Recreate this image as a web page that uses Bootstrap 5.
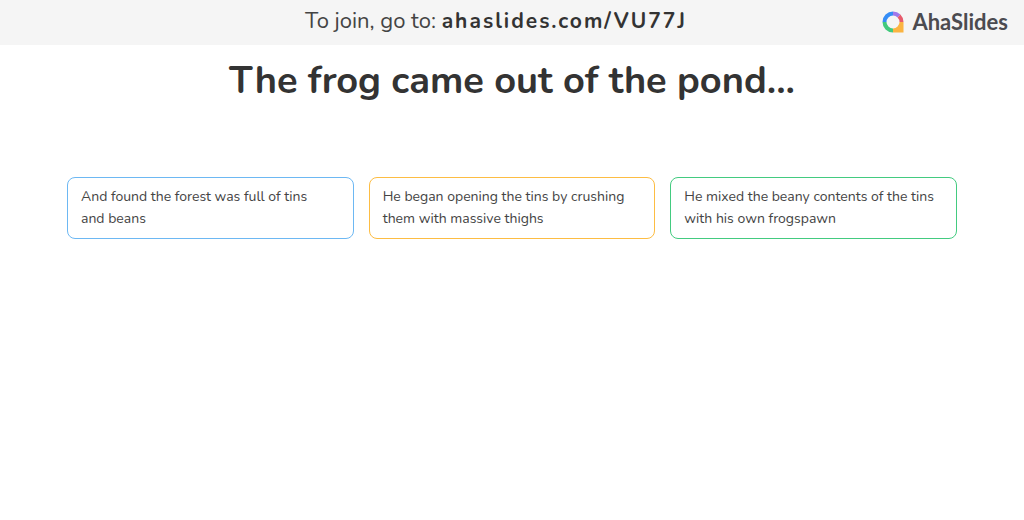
<!DOCTYPE html>
<html lang="en">
<head>
<meta charset="utf-8">
<meta name="viewport" content="width=device-width, initial-scale=1">
<title>The frog came out of the pond... - AhaSlides</title>
<link href="https://cdn.jsdelivr.net/npm/bootstrap@5.3.0/dist/css/bootstrap.min.css" rel="stylesheet">
<style>
body{font-family:Nunito,"Open Sans",sans-serif;color:#333;background:#fff}
.join-bar{background:#f5f5f5;display:grid;grid-template-columns:1fr auto 1fr;padding-bottom:2px}
.join-text{font-size:22px;line-height:43px;margin-right:32px}
.join-text span{color:#444}
.join-text b{font-size:21px;font-weight:700;letter-spacing:2px}
.brand-logo{font-family:Lato,sans-serif;font-weight:700;font-size:22px;line-height:43px;color:#4b4b50;gap:8px}
.slide-title{font-size:38px;line-height:48px;font-weight:700;margin-top:12px}
.answers{padding:0 67px;margin-top:72px;gap:15px}
.answer{border:1px solid;border-radius:8px;font-size:14px;line-height:22px;padding:8px 20px 8px 13px;flex:1 1 0;color:#444}
.answer-blue{border-color:#6db8f3}
.answer-amber{border-color:#fdbd43}
.answer-green{border-color:#43cb80}
</style>
</head>
<body>
<header class="join-bar align-items-center px-3">
<span></span>
<div class="join-text"><span>To join, go to:</span> <b>ahaslides.com/VU77J</b></div>
<div class="brand-logo d-flex align-items-center justify-content-end">
<svg width="22" height="22" viewBox="0 0 22 22" fill="none" stroke-width="4" aria-hidden="true">
<path d="M2.500 11A8.500 8.500 0 0 1 11 2.500" stroke="#358df6"/>
<path d="M11 2.500a8.500 8.500 0 0 1 6 2.500" stroke="#a078ea"/>
<path d="M17 5a8.500 8.500 0 0 1 2.500 6" stroke="#e75b6c"/>
<path d="M2.500 11a8.500 8.500 0 0 0 8.500 8.500" stroke="#42c97c"/>
<path d="M17.500 11h4v10.500H11v-4a6.500 6.500 0 0 0 6.500-6.500z" fill="#fbb441"/>
</svg>
<span>AhaSlides</span>
</div>
</header>
<main>
<h1 class="slide-title text-center mb-0">The frog came out of the pond...</h1>
<div class="answers d-flex">
<div class="answer answer-blue">And found the forest was full of tins and beans</div>
<div class="answer answer-amber">He began opening the tins by crushing them with massive thighs</div>
<div class="answer answer-green">He mixed the beany contents of the tins with his own frogspawn</div>
</div>
</main>
<script src="https://cdn.jsdelivr.net/npm/bootstrap@5.3.0/dist/js/bootstrap.bundle.min.js"></script>
</body>
</html>
